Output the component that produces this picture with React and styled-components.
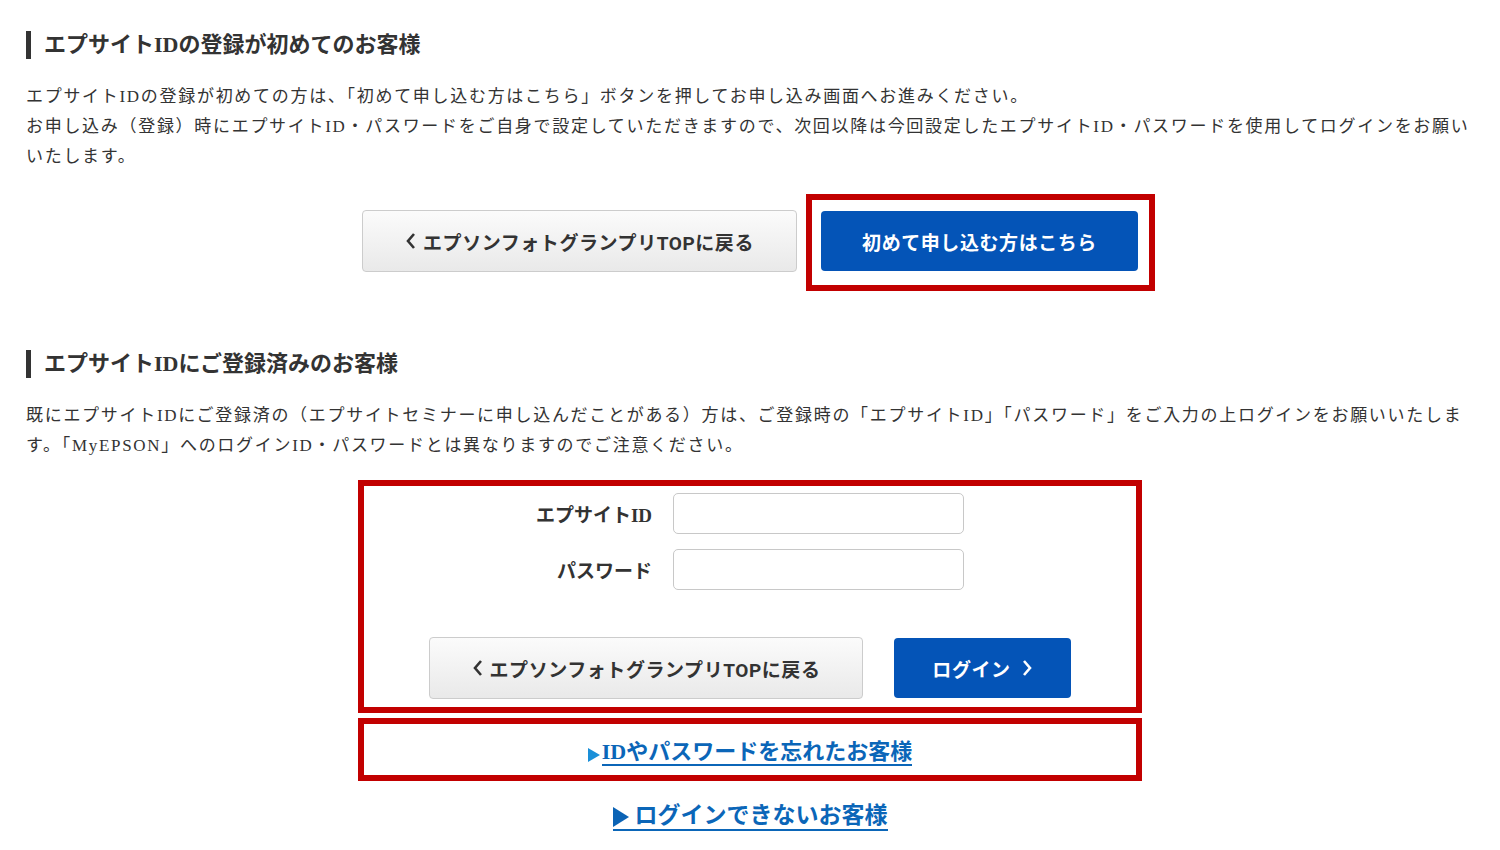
import React from 'react';
import styled, { createGlobalStyle } from 'styled-components';

const GlobalStyle = createGlobalStyle`
  body {
    margin: 0;
    background: #fff;
    color: #333;
    font-family: "Liberation Serif", "Noto Sans CJK JP", serif;
  }
`;

const ChevronLeft = () => (
  <svg width="12" height="18" viewBox="0 0 12 18">
    <polyline points="9,2 3,9 9,16" fill="none" stroke="currentColor" strokeWidth="2.6" />
  </svg>
);

const ChevronRight = () => (
  <svg width="12" height="18" viewBox="0 0 12 18">
    <polyline points="3,2 9,9 3,16" fill="none" stroke="currentColor" strokeWidth="2.6" />
  </svg>
);

const Triangle = ({ w, h }) => (
  <svg width={w} height={h} viewBox={`0 0 ${w} ${h}`}>
    <polygon points={`0,0 ${w},${h / 2} 0,${h}`} fill="currentColor" />
  </svg>
);

function App() {
  return (
    <Page>
      <GlobalStyle />

      <Heading>エプサイトIDの登録が初めてのお客様</Heading>
      <Text>
        エプサイトIDの登録が初めての方は、「初めて申し込む方はこちら」ボタンを押してお申し込み画面へお進みください。
        <br />
        お申し込み（登録）時にエプサイトID・パスワードをご自身で設定していただきますので、次回以降は今回設定したエプサイトID・パスワードを使用してログインをお願いいたします。
      </Text>
      <ButtonRow gap={24}>
        <GrayButton width={435}>
          <ChevronLeft />
          エプソンフォトグランプリTOPに戻る
        </GrayButton>
        <BlueButton width={317} marked>
          初めて申し込む方はこちら
        </BlueButton>
      </ButtonRow>

      <Heading second>エプサイトIDにご登録済みのお客様</Heading>
      <Text>
        既にエプサイトIDにご登録済の（エプサイトセミナーに申し込んだことがある）方は、ご登録時の「エプサイトID」「パスワード」をご入力の上ログインをお願いいたします。「MyEPSON」へのログインID・パスワードとは異なりますのでご注意ください。
      </Text>

      <MarkBox>
        <Form>
          <Label>エプサイトID</Label>
          <Input type="text" />
          <Label>パスワード</Label>
          <Input type="password" />
        </Form>
        <ButtonRow gap={31}>
          <GrayButton width={434}>
            <ChevronLeft />
            エプソンフォトグランプリTOPに戻る
          </GrayButton>
          <BlueButton width={177}>
            ログイン
            <ChevronRight />
          </BlueButton>
        </ButtonRow>
      </MarkBox>

      <LinkBox>
        <TextLink href="#">
          <Arrow>
            <Triangle w={12} h={14} />
          </Arrow>
          <LinkText>IDやパスワードを忘れたお客様</LinkText>
        </TextLink>
      </LinkBox>

      <PlainLinkRow>
        <TextLink href="#" big>
          <Arrow big>
            <Triangle w={16} h={20} />
          </Arrow>
          <LinkText big>ログインできないお客様</LinkText>
        </TextLink>
      </PlainLinkRow>
    </Page>
  );
}

const Page = styled.div`
  width: 1500px;
  padding: 31px 26px 30px;
  box-sizing: border-box;
`;

const Heading = styled.h2`
  margin: ${(p) => (p.second ? '78px' : '0')} 0 23px;
  padding-left: 13px;
  border-left: 5px solid #333;
  font-size: 22px;
  line-height: 28px;
  font-weight: bold;
  color: #333;
`;

const Text = styled.p`
  margin: 0;
  font-size: 17px;
  line-height: 30px;
  letter-spacing: 0.1em;
  color: #333;
`;

const ButtonRow = styled.div`
  display: flex;
  justify-content: center;
  align-items: center;
  gap: ${(p) => p.gap}px;
  margin-top: 38px;
`;

const buttonBase = `
  display: flex;
  align-items: center;
  justify-content: center;
  gap: 6px;
  box-sizing: border-box;
  font-family: Roboto, "Noto Sans CJK JP", sans-serif;
  font-size: 19px;
  font-weight: bold;
  letter-spacing: 0.03em;
  border-radius: 4px;
  cursor: pointer;
`;

const GrayButton = styled.button`
  ${buttonBase}
  width: ${(p) => p.width}px;
  height: 62px;
  color: #333;
  background: linear-gradient(#fbfbfb, #e9e9e9);
  border: 1px solid #ccc;
`;

const BlueButton = styled.button`
  ${buttonBase}
  position: relative;
  width: ${(p) => p.width}px;
  height: 60px;
  color: #fff;
  background: #0454b7;
  border: none;
  gap: 10px;

  &::after {
    content: '';
    display: ${(p) => (p.marked ? 'block' : 'none')};
    position: absolute;
    top: -17px;
    left: -15px;
    right: -17px;
    bottom: -20px;
    border: 6px solid #c20000;
    pointer-events: none;
  }
`;

const MarkBox = styled.div`
  width: 784px;
  box-sizing: border-box;
  margin: 19px auto 0;
  padding: 7px 0 8px;
  border: 6px solid #c20000;

  ${ButtonRow} {
    margin-top: 47px;
  }
`;

const Form = styled.div`
  display: grid;
  grid-template-columns: auto 291px;
  justify-content: center;
  align-items: center;
  column-gap: 21px;
  row-gap: 15px;
`;

const Label = styled.label`
  text-align: right;
  font-size: 19px;
  font-weight: bold;
  color: #333;
`;

const Input = styled.input`
  width: 291px;
  height: 41px;
  box-sizing: border-box;
  border: 1px solid #c8c8c8;
  border-radius: 5px;
  background: #fff;
`;

const LinkBox = styled.div`
  width: 784px;
  height: 63px;
  box-sizing: border-box;
  margin: 5px auto 0;
  padding-top: 5px;
  border: 6px solid #c20000;
  display: flex;
  align-items: center;
  justify-content: center;
`;

const PlainLinkRow = styled.div`
  display: flex;
  justify-content: center;
  margin-top: 22px;
`;

const TextLink = styled.a`
  display: inline-flex;
  align-items: flex-end;
  font-size: ${(p) => (p.big ? '23px' : '22px')};
  font-weight: bold;
  color: #0b66b8;
  text-decoration: none;
  padding-bottom: ${(p) => (p.big ? '1px' : '0')};
  border-bottom: ${(p) => (p.big ? '2px solid #0b66b8' : 'none')};
`;

const LinkText = styled.span`
  line-height: 25px;
  border-bottom: ${(p) => (p.big ? 'none' : '2px solid #0b66b8')};
`;

const Arrow = styled.span`
  display: flex;
  padding-bottom: ${(p) => (p.big ? '1px' : '4px')};
  margin-right: ${(p) => (p.big ? '6px' : '2px')};
  color: ${(p) => (p.big ? '#0b63b5' : '#1a8fd8')};
`;

export default App;
